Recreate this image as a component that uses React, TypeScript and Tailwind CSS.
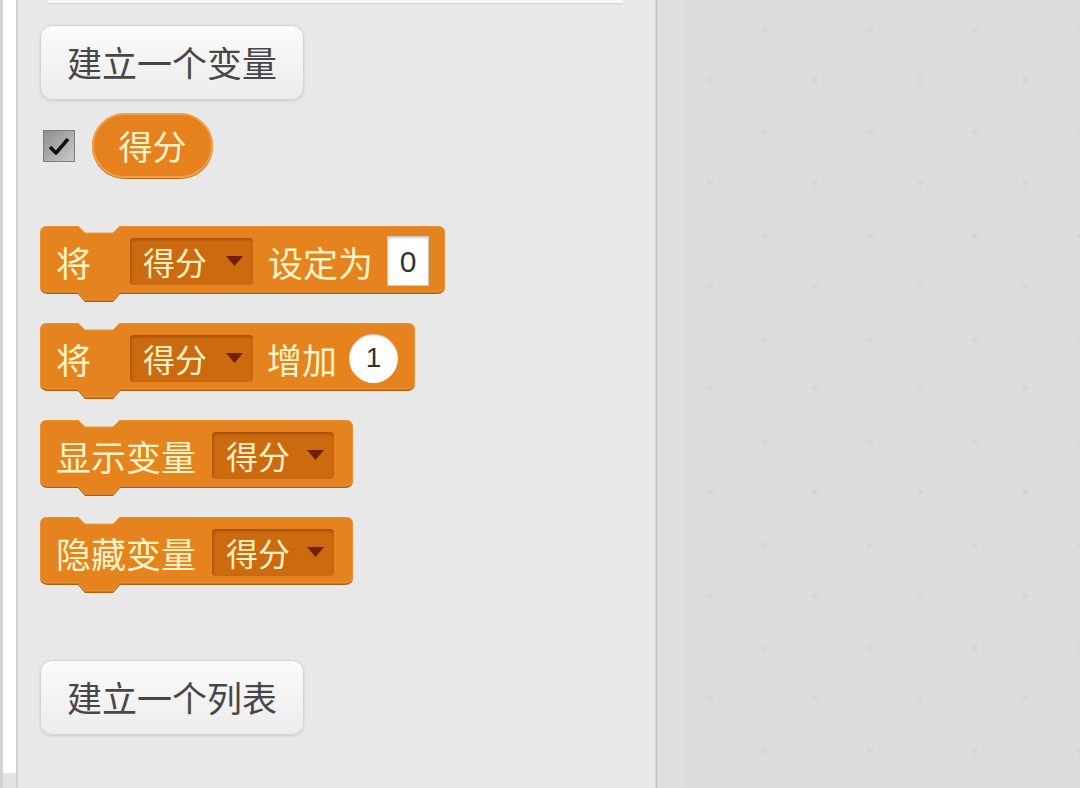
const cjk = "font-['Noto_Sans_CJK_SC','Noto_Sans',sans-serif]";

function blockPath(w: number, h: number) {
  const r = 8;
  return `M0 ${r} Q0 0 ${r} 0 L38 0 L45 7 L73 7 L80 0 L${w - r} 0 Q${w} 0 ${w} ${r} L${w} ${h - r} Q${w} ${h} ${w - r} ${h} L80 ${h} L73 ${h + 8} L45 ${h + 8} L38 ${h} L${r} ${h} Q0 ${h} 0 ${h - r} Z`;
}

function Arrow() {
  return (
    <svg width="17" height="10" viewBox="0 0 17 10">
      <polygon points="0,0 17,0 8.5,10" fill="#6e2108" />
    </svg>
  );
}

function Dropdown({ width, pl, gap }: { width: string; pl: string; gap: string }) {
  return (
    <div
      className={`flex items-center h-[47px] rounded-[4px] bg-[#cc6a10] shadow-[inset_1px_2px_3px_rgba(90,30,0,0.35)] ${width} ${pl} ${gap}`}
    >
      <span className="text-[32px] leading-none text-[#fff0c4]">得分</span>
      <Arrow />
    </div>
  );
}

function Block({ width, children }: { width: number; children: React.ReactNode }) {
  return (
    <div className="grid" style={{ width }}>
      <svg
        className="col-start-1 row-start-1"
        width={width}
        height={78}
        viewBox={`0 0 ${width} 78`}
      >
        <path d={blockPath(width, 66)} transform="translate(0 2)" fill="#b45d0e" />
        <path d={blockPath(width, 66)} fill="#e5831e" stroke="#ee9a45" strokeWidth="1" />
      </svg>
      <div className={`col-start-1 row-start-1 flex items-center h-[70px] pl-[16px] text-[#fff3c8] ${cjk}`}>
        {children}
      </div>
    </div>
  );
}

function PaletteButton({ label }: { label: string }) {
  return (
    <button
      className={`w-[264px] h-[75px] rounded-[12px] border border-[#d4d4d4] bg-gradient-to-b from-[#fbfbfb] to-[#ececec] shadow-[0_1px_3px_rgba(0,0,0,0.12)] text-[35px] text-[#474747] ${cjk}`}
    >
      {label}
    </button>
  );
}

export default function App() {
  return (
    <div className="flex w-[1080px] h-[788px] overflow-hidden bg-[#e8e8e9]">
      {/* left edge strip */}
      <div className="flex flex-col w-[18px] shrink-0 border-l-[3px] border-r-2 border-[#d2d2d2]">
        <div className="h-[773px] bg-white" />
        <div className="flex-1 bg-[#e3e3e3]" />
      </div>

      {/* palette */}
      <div className="w-[637px] shrink-0 flex flex-col pl-[22px] bg-[#e8e8e9]">
        <div className="ml-[7px] w-[576px] h-[3px] bg-[#f7f7f7] shadow-[0_1px_2px_rgba(0,0,0,0.08)]" />

        <div className="mt-[22px]">
          <PaletteButton label="建立一个变量" />
        </div>

        <div className="mt-[13px] flex items-center h-[65px]">
          <div className="ml-[3px] w-[32px] h-[32px] border border-[#7e7e7e] bg-gradient-to-br from-[#8e8e8e] to-[#cacaca] flex items-center justify-center">
            <svg width="24" height="22" viewBox="0 0 24 22">
              <path d="M3 12 L9 18 L21 4" fill="none" stroke="#111" strokeWidth="3.5" strokeLinejoin="round" />
            </svg>
          </div>
          <div
            className={`ml-[17px] w-[121px] h-[65px] rounded-full bg-[#e5821d] border-2 border-[#f0a04e] shadow-[0_1px_0_#c46a14] flex items-center justify-center text-[34px] text-[#fff3c8] ${cjk}`}
          >
            得分
          </div>
        </div>

        <div className="mt-[48px] flex flex-col gap-[19px]">
          <Block width={405}>
            <span className="text-[35px] leading-none">将</span>
            <div className="ml-[39px]">
              <Dropdown width="w-[123px]" pl="pl-[13px]" gap="gap-[19px]" />
            </div>
            <span className="ml-[15px] text-[35px] leading-none">设定为</span>
            <div className="ml-[14px] w-[42px] h-[50px] bg-white border border-[#c9c9c9] shadow-[inset_0_1px_2px_rgba(0,0,0,0.2)] flex items-center justify-center text-[30px] text-[#333] font-['Liberation_Sans',sans-serif]">
              0
            </div>
          </Block>

          <Block width={375}>
            <span className="text-[35px] leading-none">将</span>
            <div className="ml-[39px]">
              <Dropdown width="w-[123px]" pl="pl-[13px]" gap="gap-[19px]" />
            </div>
            <span className="ml-[14px] text-[35px] leading-none">增加</span>
            <div className="ml-[12px] w-[49px] h-[49px] rounded-full bg-white shadow-[inset_0_1px_2px_rgba(0,0,0,0.25)] flex items-center justify-center text-[28px] text-[#333] font-['Liberation_Sans',sans-serif]">
              1
            </div>
          </Block>

          <Block width={313}>
            <span className="text-[35px] leading-none">显示变量</span>
            <div className="ml-[16px]">
              <Dropdown width="w-[122px]" pl="pl-[14px]" gap="gap-[17px]" />
            </div>
          </Block>

          <Block width={313}>
            <span className="text-[35px] leading-none">隐藏变量</span>
            <div className="ml-[16px]">
              <Dropdown width="w-[122px]" pl="pl-[14px]" gap="gap-[17px]" />
            </div>
          </Block>
        </div>

        <div className="mt-[65px]">
          <PaletteButton label="建立一个列表" />
        </div>
      </div>

      {/* divider */}
      <div className="w-[3px] shrink-0 bg-[#c4c4c5] border-x border-[#d6d6d7]" />

      {/* script area */}
      <div className="flex-1 flex bg-[#dddddf]">
        <div className="w-[26px] shrink-0 bg-[#dfdfe0]" />
        <svg className="flex-1" width="100%" height="100%">
          <defs>
            <radialGradient id="dot">
              <stop offset="0%" stopColor="#d0d0d3" />
              <stop offset="100%" stopColor="#dddddf" stopOpacity="0" />
            </radialGradient>
            <pattern id="dots" x="-26" width="105" height="103" patternUnits="userSpaceOnUse">
              <circle cx="52" cy="80" r="6" fill="url(#dot)" />
              <circle cx="2" cy="30" r="6" fill="url(#dot)" />
              <circle cx="107" cy="30" r="6" fill="url(#dot)" />
            </pattern>
          </defs>
          <rect width="100%" height="100%" fill="url(#dots)" />
        </svg>
      </div>
    </div>
  );
}
